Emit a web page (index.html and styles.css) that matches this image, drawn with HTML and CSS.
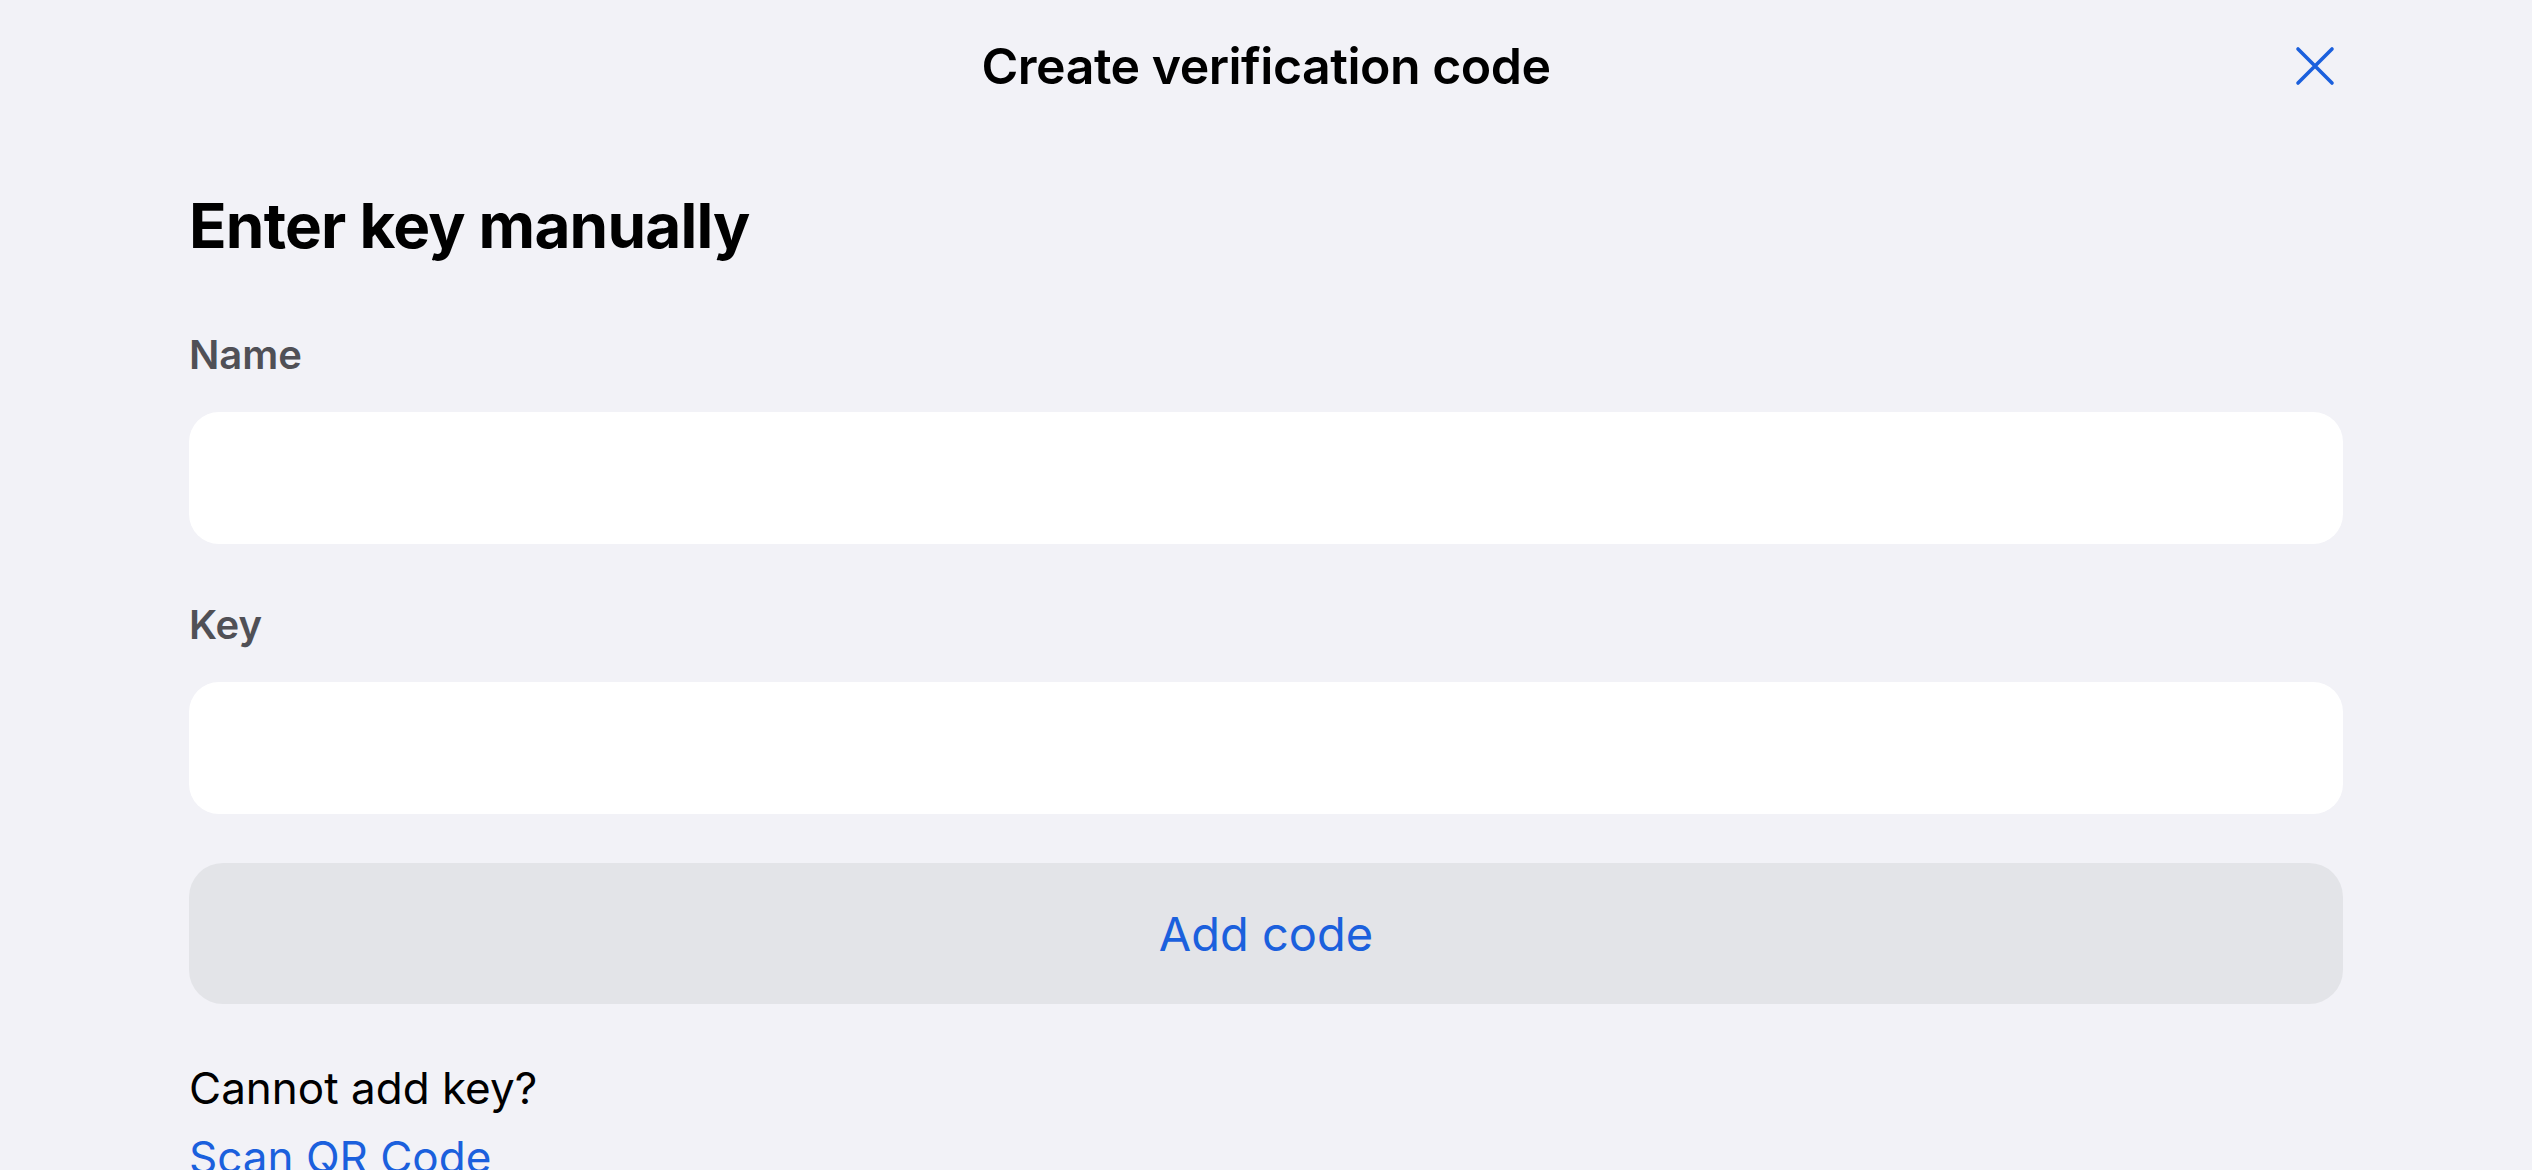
FILE: index.html
```html
<!DOCTYPE html>
<html lang="en">
<head>
<meta charset="utf-8">
<title>Create verification code</title>
<link rel="stylesheet" href="styles.css">
</head>
<body>
<div class="sheet">
  <header class="nav">
    <div class="nav-spacer"></div>
    <h1 class="nav-title">Create verification code</h1>
    <div class="nav-actions">
      <button class="close" aria-label="Close">
        <svg viewBox="0 0 40 40" width="40" height="40" aria-hidden="true">
          <path d="M3 3 L37 37 M37 3 L3 37" fill="none" stroke="currentColor" stroke-width="3.6" stroke-linecap="round"/>
        </svg>
      </button>
    </div>
  </header>
  <main class="content">
    <h2 class="title">Enter key manually</h2>
    <div class="field">
      <label class="field-label" for="name">Name</label>
      <input class="field-input" id="name" type="text">
    </div>
    <div class="field">
      <label class="field-label" for="key">Key</label>
      <input class="field-input" id="key" type="text">
    </div>
    <button class="primary">Add code</button>
    <div class="help">
      <p class="help-text">Cannot add key?</p>
      <a class="help-link" href="#">Scan QR Code</a>
    </div>
  </main>
</div>
</body>
</html>
```
FILE: styles.css
```css
html, body {
  margin: 0;
  padding: 0;
  background: #f2f2f7;
}

body {
  font-family: "Inter", "Liberation Sans", sans-serif;
  color: #000;
  overflow: hidden;
  height: 1170px;
}

.sheet {
  width: 2532px;
}

.nav {
  height: 132px;
  display: grid;
  grid-template-columns: 1fr auto 1fr;
  align-items: center;
  padding: 0 197px;
}

.nav-title {
  margin: 0;
  font-size: 50px;
  line-height: 60px;
  font-weight: 600;
  letter-spacing: -0.5px;
}

.nav-actions {
  display: flex;
  justify-content: flex-end;
}

.close {
  width: 40px;
  height: 40px;
  padding: 0;
  border: 0;
  background: none;
  color: #1b60dd;
  display: flex;
}

.content {
  padding: 56px 189px 0;
  display: flex;
  flex-direction: column;
}

.title {
  margin: 0;
  font-size: 62px;
  line-height: 76px;
  font-weight: 700;
  letter-spacing: -0.8px;
}

.field {
  display: flex;
  flex-direction: column;
  gap: 33px;
  margin-top: 67px;
}

.field + .field {
  margin-top: 57px;
}

.field-label {
  font-size: 40px;
  line-height: 48px;
  font-weight: 600;
  color: #505056;
}

.field-input {
  height: 132px;
  box-sizing: border-box;
  border: 0;
  border-radius: 30px;
  background: #fff;
  font: inherit;
  font-size: 44px;
  padding: 0 36px;
  outline: none;
}

.primary {
  margin-top: 49px;
  height: 141px;
  border: 0;
  border-radius: 34px;
  background: #e3e4e8;
  color: #1b60dd;
  font-family: inherit;
  font-size: 47px;
  font-weight: 400;
  display: flex;
  align-items: center;
  justify-content: center;
  padding: 0;
}

.help {
  margin-top: 58px;
  display: flex;
  flex-direction: column;
  gap: 17px;
}

.help-text {
  margin: 0;
  font-size: 44px;
  line-height: 52px;
}

.help-link {
  font-size: 44px;
  line-height: 52px;
  color: #1b60dd;
  text-decoration: none;
  align-self: flex-start;
}
```
